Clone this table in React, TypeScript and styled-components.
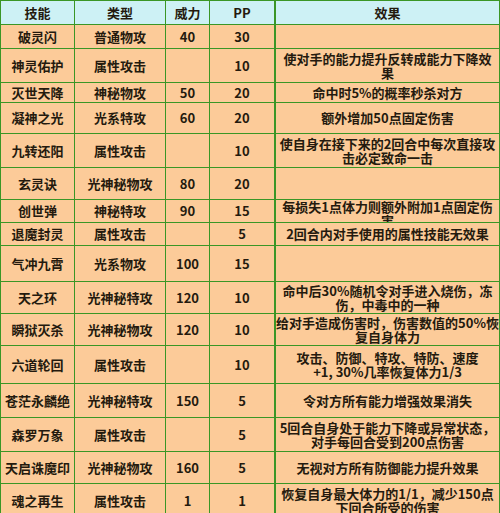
import React from 'react';
import styled, { createGlobalStyle } from 'styled-components';

const GlobalStyle = createGlobalStyle`
  html, body {
    margin: 0;
    padding: 0;
    background: #ffffff;
    overflow: hidden;
  }
`;

const LINE = '#3a9626';

const Table = styled.div`
  width: 500px;
  height: 513px;
  overflow: hidden;
  box-sizing: border-box;
  border-left: 1px solid ${LINE};
  border-top: 1px solid ${LINE};
  font-family: 'Noto Sans CJK SC', 'DejaVu Sans', sans-serif;
  font-size: 13px;
  font-weight: 700;
  line-height: 14px;
  color: #241a0e;
`;

const Row = styled.div<{ $h: number; $head?: boolean }>`
  display: grid;
  grid-template-columns: 74px 91px 44px 65px 1fr;
  height: ${({ $h }) => $h}px;
  box-sizing: border-box;
  border-bottom: 1px solid ${LINE};
  background: ${({ $head }) => ($head ? '#cdf1f5' : '#fccb99')};
`;

const Cell = styled.div<{ $wide?: boolean }>`
  display: flex;
  flex-direction: column;
  justify-content: safe center;
  align-items: center;
  text-align: center;
  overflow: hidden;
  box-sizing: border-box;
  border-right: 1px solid ${LINE};
  border-left: ${({ $wide }) => ($wide ? `1px solid ${LINE}` : 'none')};
  padding: 0 2px;
  white-space: nowrap;
`;

type Skill = {
  name: string;
  kind: string;
  power: string;
  pp: string;
  effect: string[];
  h: number;
};

const skills: Skill[] = [
  { name: '破灵闪', kind: '普通物攻', power: '40', pp: '30', effect: [], h: 24 },
  { name: '神灵佑护', kind: '属性攻击', power: '', pp: '10', effect: ['使对手的能力提升反转成能力下降效', '果'], h: 34 },
  { name: '灭世天降', kind: '神秘物攻', power: '50', pp: '20', effect: ['命中时5%的概率秒杀对方'], h: 20 },
  { name: '凝神之光', kind: '光系特攻', power: '60', pp: '20', effect: ['额外增加50点固定伤害'], h: 31 },
  { name: '九转还阳', kind: '属性攻击', power: '', pp: '10', effect: ['使自身在接下来的2回合中每次直接攻', '击必定致命一击'], h: 34 },
  { name: '玄灵诀', kind: '光神秘物攻', power: '80', pp: '20', effect: [], h: 32 },
  { name: '创世弹', kind: '神秘特攻', power: '90', pp: '15', effect: ['每损失1点体力则额外附加1点固定伤', '害'], h: 23 },
  { name: '退魔封灵', kind: '属性攻击', power: '', pp: '5', effect: ['2回合内对手使用的属性技能无效果'], h: 23 },
  { name: '气冲九霄', kind: '光系物攻', power: '100', pp: '15', effect: [], h: 36 },
  { name: '天之环', kind: '光神秘特攻', power: '120', pp: '10', effect: ['命中后30%随机令对手进入烧伤，冻', '伤，中毒中的一种'], h: 32 },
  { name: '瞬狱灭杀', kind: '光神秘物攻', power: '120', pp: '10', effect: ['给对手造成伤害时，伤害数值的50%恢', '复自身体力'], h: 32 },
  { name: '六道轮回', kind: '属性攻击', power: '', pp: '10', effect: ['攻击、防御、特攻、特防、速度', '+1, 30%几率恢复体力1/3'], h: 38 },
  { name: '苍茫永麟绝', kind: '光神秘特攻', power: '150', pp: '5', effect: ['令对方所有能力增强效果消失'], h: 34 },
  { name: '森罗万象', kind: '属性攻击', power: '', pp: '5', effect: ['5回合自身处于能力下降或异常状态，', '对手每回合受到200点伤害'], h: 34 },
  { name: '天启诛魔印', kind: '光神秘物攻', power: '160', pp: '5', effect: ['无视对方所有防御能力提升效果'], h: 32 },
  { name: '魂之再生', kind: '属性攻击', power: '1', pp: '1', effect: ['恢复自身最大体力的1/1，减少150点', '下回合所受的伤害'], h: 34 },
];

const App: React.FC = () => {
  return (
    <>
      <GlobalStyle />
      <Table>
        <Row $h={24} $head>
          <Cell>技能</Cell>
          <Cell>类型</Cell>
          <Cell>威力</Cell>
          <Cell>PP</Cell>
          <Cell $wide>效果</Cell>
        </Row>
        {skills.map((s) => (
          <Row key={s.name} $h={s.h}>
            <Cell>{s.name}</Cell>
            <Cell>{s.kind}</Cell>
            <Cell>{s.power}</Cell>
            <Cell>{s.pp}</Cell>
            <Cell $wide>
              {s.effect.map((line) => (
                <span key={line}>{line}</span>
              ))}
            </Cell>
          </Row>
        ))}
      </Table>
    </>
  );
};

export default App;
